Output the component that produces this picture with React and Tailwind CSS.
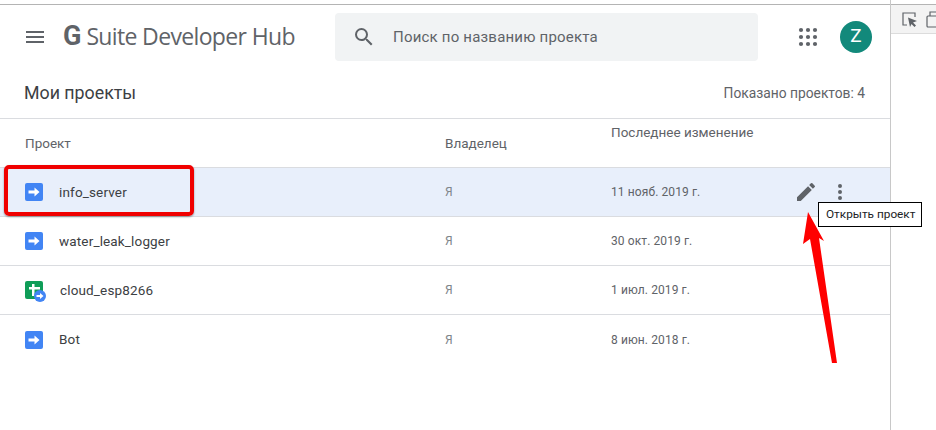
const projects = [
  { name: 'info_server', date: '11 нояб. 2019 г.', active: true },
  { name: 'water_leak_logger', date: '30 окт. 2019 г.' },
  { name: 'cloud_esp8266', date: '1 июл. 2019 г.', sheet: true },
  { name: 'Bot', date: '8 июн. 2018 г.', last: true },
];

function MaterialIcon({ d, size = 24, className = '' }) {
  return (
    <svg width={size} height={size} viewBox="0 0 24 24" fill="#5f6368" className={`shrink-0 ${className}`}>
      <path d={d} />
    </svg>
  );
}

function ScriptIcon() {
  return (
    <svg width="18" height="18" viewBox="0 0 18 18">
      <rect width="18" height="18" rx="2" fill="#4285f4" />
      <path d="M3.500 7.500h6V4.500L14.500 9l-5 4.500v-3h-6z" fill="#fff" />
    </svg>
  );
}

function SheetIcon() {
  return (
    <svg width="22" height="22" viewBox="0 0 22 22">
      <rect width="18" height="18" rx="2" fill="#0f9d58" />
      <path d="M7 3h2.500v3H15v2.500H9.500V15H7V8.500H4V6h3z" fill="#fff" />
      <circle cx="15" cy="15" r="6" fill="#4285f4" />
      <path d="M11.500 14h3.500v-2l3.500 3-3.500 3v-2h-3.500z" fill="#fff" />
    </svg>
  );
}

function AppsIcon() {
  const spots = [5, 12, 19];
  return (
    <svg width="24" height="24" viewBox="0 0 24 24" fill="#5f6368" className="ml-[38px] shrink-0">
      {spots.map((y) => spots.map((x) => <circle key={`${x}-${y}`} cx={x} cy={y} r="2.100" />))}
    </svg>
  );
}

function ProjectRow({ project }) {
  return (
    <div className={`flex h-[49px] items-center text-[13.500px] ${project.last ? '' : 'border-b border-[#dadce0]'} ${project.active ? 'bg-[#e8effb]' : ''}`}>
      <div className="flex w-[445px] items-center pl-[25px]">
        <div className="h-[18px] w-[34px]">{project.sheet ? <SheetIcon /> : <ScriptIcon />}</div>
        <span className={`tracking-[0.15px] text-[#3c4043] ${project.sheet ? 'ml-px' : ''}`}>{project.name}</span>
      </div>
      <div className="w-[166px] text-[12px] text-[#80868b]">Я</div>
      <div className="flex-1 text-[12px] tracking-[0.1px] text-[#5f6368]">{project.date}</div>
      {project.active && (
        <div className="flex items-center gap-[11px] pr-[38px]">
          <MaterialIcon d="M3 17.250V21h3.750L17.810 9.940l-3.750-3.750L3 17.250zM20.710 7.040a1 1 0 0 0 0-1.410l-2.340-2.340a1 1 0 0 0-1.410 0l-1.830 1.830 3.750 3.750 1.830-1.830z" />
          <MaterialIcon className="-ml-[1px]" d="M12 8a2 2 0 1 0 0-4 2 2 0 0 0 0 4zm0 2a2 2 0 1 0 0 4 2 2 0 0 0 0-4zm0 6a2 2 0 1 0 0 4 2 2 0 0 0 0-4z" />
        </div>
      )}
    </div>
  );
}

export default function App() {
  return (
    <div className="relative flex h-[430px] w-[936px] overflow-hidden bg-white font-['Roboto',sans-serif]">
      <div className="w-[890px] pt-1">
        <div className="h-px bg-[#b4b4b4]" />
        <header className="flex h-[65px] items-center pb-[2px] pl-[23px] pr-[18px]">
          <MaterialIcon d="M3 18h18v-2H3v2zm0-5h18v-2H3v2zm0-7v2h18V6H3z" />
          <div className="ml-[16px] flex w-[272px] items-center text-[#5f6368]">
            <span className="text-[27px] font-bold leading-none">G</span>
            <span className="ml-[5px] font-['Open_Sans',sans-serif] text-[23px] leading-none tracking-[-0.65px]">Suite Developer Hub</span>
          </div>
          <div className="flex h-12 w-[423px] items-center rounded bg-[#f1f3f4] pl-[17px] text-[#5f6368]">
            <MaterialIcon d="M15.500 14h-.790l-.280-.270A6.470 6.470 0 0 0 16 9.500 6.500 6.500 0 1 0 9.500 16c1.610 0 3.090-.590 4.230-1.570l.270.280v.790l5 4.990L20.490 19l-4.990-5zm-6 0C7.010 14 5 11.990 5 9.500S7.010 5 9.500 5 14 7.010 14 9.500 11.990 14 9.500 14z" />
            <span className="ml-[17px] pt-[2px] text-[15px] tracking-[0.2px]">Поиск по названию проекта</span>
          </div>
          <AppsIcon />
          <div className="ml-[20px] flex h-8 w-8 items-center justify-center rounded-full bg-[#12897b] text-[19px] text-white">Z</div>
        </header>
        <div className="flex h-[49px] items-center justify-between border-b border-[#dadce0] pb-[2px] pl-6 pr-[25px]">
          <h1 className="text-[17.800px] text-[#3c4043]">Мои проекты</h1>
          <span className="text-[13.800px] text-[#5f6368]">Показано проектов: 4</span>
        </div>
        <div className="flex h-[49px] border-b border-[#dadce0] text-[13.500px] text-[#5f6368]">
          <div className="w-[445px] pl-[25px] pt-[14px]">Проект</div>
          <div className="w-[166px] pt-[14px]">Владелец</div>
          <div className="pt-[3px]">Последнее изменение</div>
        </div>
        {projects.map((project) => (
          <ProjectRow key={project.name} project={project} />
        ))}
      </div>

      <div className="flex-1 border-l border-[#c8c8c8] bg-white pt-1">
        <div className="flex h-[30px] items-center gap-[8px] border-t border-b border-t-[#b4b4b4] border-b-[#dcdcdc] bg-[#f3f3f3] pl-[10px]">
          <svg width="17" height="17" viewBox="0 0 17 17" className="shrink-0" fill="none">
            <path d="M6 14H2V2h12v4" stroke="#5f6368" strokeWidth="1.200" />
            <path d="M7 6.500l9 3.500-4 1.500 3 3-1.500 1.500-3-3L9 16z" fill="#5f6368" />
          </svg>
          <svg width="14" height="18" viewBox="0 0 14 18" className="shrink-0" fill="none">
            <rect x="1" y="6" width="12" height="11" rx="1" stroke="#5f6368" strokeWidth="1.200" />
            <path d="M4 6V2h8v4" stroke="#5f6368" strokeWidth="1.200" />
          </svg>
        </div>
      </div>

      {/* annotations drawn on top of the screenshot */}
      <div className="absolute left-[4px] top-[165px] h-[51px] w-[190px] rounded-[5px] border-[4px] border-[#f00000] shadow-[0_1px_2px_rgba(0,0,0,0.4)]" />
      <div className="absolute left-[818px] top-[202px] flex h-[25px] w-[104px] items-center border border-black bg-white pl-[7px] text-[11.800px] text-[#202124]">
        Открыть проект
      </div>
      <svg className="absolute left-[795px] top-[205px]" width="50" height="165" viewBox="0 0 50 165">
        <path d="M13 7L8 39L15 34L37 158L42 158L24 33L29 36z" fill="#ff0000" />
      </svg>
    </div>
  );
}
